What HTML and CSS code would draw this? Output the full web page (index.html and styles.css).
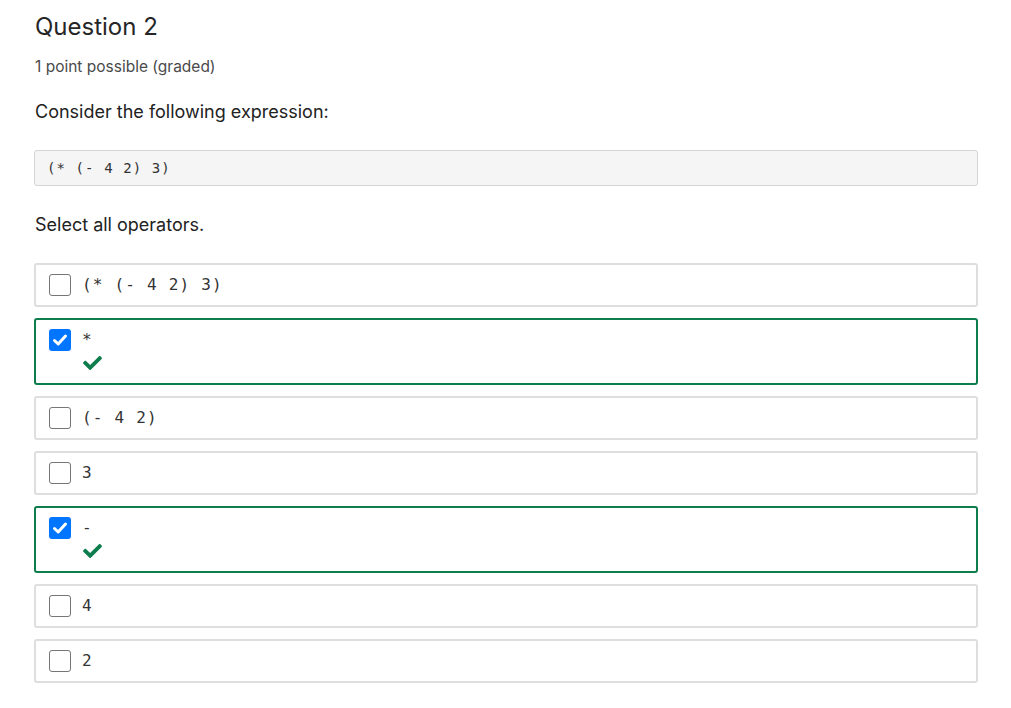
FILE: index.html
```html
<!DOCTYPE html>
<html>
<head>
<meta charset="utf-8">
<link rel="stylesheet" href="styles.css">
</head>
<body>
<div class="problem">
  <h2 class="title">Question 2</h2>
  <div class="meta">1 point possible (graded)</div>
  <p class="prompt">Consider the following expression:</p>
  <pre class="code">(* (- 4 2) 3)</pre>
  <p class="prompt select">Select all operators.</p>
  <div class="choices">
    <div class="choice">
      <span class="box"></span>
      <div class="label"><span class="mono">(* (- 4 2) 3)</span></div>
    </div>
    <div class="choice correct">
      <span class="box checked"><svg viewBox="0 0 22 22" width="22" height="22"><path d="M5.5 11.5 L9.2 15 L16.5 7" fill="none" stroke="#fff" stroke-width="3" stroke-linecap="round" stroke-linejoin="round"/></svg></span>
      <div class="label"><span class="mono">*</span>
        <svg class="tick" viewBox="0 66 512 380" width="19" height="14"><path fill="#0d7d4d" d="M173.9 439.4L7.5 273c-10-10-10-26.2 0-36.2l36.2-36.2c10-10 26.2-10 36.2 0L192 312.7 432.1 72.6c10-10 26.2-10 36.2 0l36.2 36.2c10 10 10 26.2 0 36.2L210.1 439.4c-10 10-26.2 10-36.2 0z"/></svg>
      </div>
    </div>
    <div class="choice">
      <span class="box"></span>
      <div class="label"><span class="mono">(- 4 2)</span></div>
    </div>
    <div class="choice">
      <span class="box"></span>
      <div class="label"><span class="mono">3</span></div>
    </div>
    <div class="choice correct">
      <span class="box checked"><svg viewBox="0 0 22 22" width="22" height="22"><path d="M5.5 11.5 L9.2 15 L16.5 7" fill="none" stroke="#fff" stroke-width="3" stroke-linecap="round" stroke-linejoin="round"/></svg></span>
      <div class="label"><span class="mono">-</span>
        <svg class="tick" viewBox="0 66 512 380" width="19" height="14"><path fill="#0d7d4d" d="M173.9 439.4L7.5 273c-10-10-10-26.2 0-36.2l36.2-36.2c10-10 26.2-10 36.2 0L192 312.7 432.1 72.6c10-10 26.2-10 36.2 0l36.2 36.2c10 10 10 26.2 0 36.2L210.1 439.4c-10 10-26.2 10-36.2 0z"/></svg>
      </div>
    </div>
    <div class="choice">
      <span class="box"></span>
      <div class="label"><span class="mono">4</span></div>
    </div>
    <div class="choice">
      <span class="box"></span>
      <div class="label"><span class="mono">2</span></div>
    </div>
  </div>
</div>
</body>
</html>
```
FILE: styles.css
```css
body {
  margin: 0;
  background: #fff;
  font-family: Inter, "Noto Sans", sans-serif;
  color: #222;
}
.problem {
  padding: 12px 33px 0 34px;
}
.title {
  margin: 0 0 0 1px;
  font-size: 24px;
  font-weight: 400;
  line-height: 30px;
  color: #262626;
}
.meta {
  margin: 15px 0 0 1px;
  font-size: 15.5px;
  line-height: 20px;
  color: #4a4a4a;
}
.prompt {
  margin: 23px 0 0 1px;
  font-size: 18px;
  line-height: 24px;
  color: #222;
}
.code {
  margin: 26px 0 0 0;
  background: #f5f5f5;
  border: 1px solid #d4d4d4;
  border-radius: 3px;
  padding: 8px 12px;
  font-family: "DejaVu Sans Mono", monospace;
  font-size: 14px;
  letter-spacing: 1.1px;
  line-height: 18px;
  color: #333;
}
.select {
  margin-top: 27px;
}
.choices {
  margin-top: 26px;
  display: flex;
  flex-direction: column;
  gap: 11px;
}
.choice {
  display: flex;
  align-items: flex-start;
  border: 2px solid #dedede;
  border-radius: 3px;
  padding: 9px 13px 9px 13px;
  min-height: 22px;
}
.choice.correct {
  border-color: #0d7d4d;
  padding-bottom: 13px;
}
.box {
  flex: none;
  width: 20px;
  height: 20px;
  border: 1px solid #767676;
  border-radius: 3px;
  background: #fff;
  display: block;
}
.box.checked {
  width: 22px;
  height: 22px;
  border: none;
  background: #0075ff;
}
.box svg { display: block; }
.label {
  margin-left: 11px;
  display: flex;
  flex-direction: column;
  align-items: flex-start;
}
.mono {
  font-family: "DejaVu Sans Mono", monospace;
  font-size: 16px;
  letter-spacing: 1.2px;
  line-height: 22px;
  color: #333;
}
.tick {
  display: block;
  margin-top: 5px;
  margin-left: 1px;
}
```
